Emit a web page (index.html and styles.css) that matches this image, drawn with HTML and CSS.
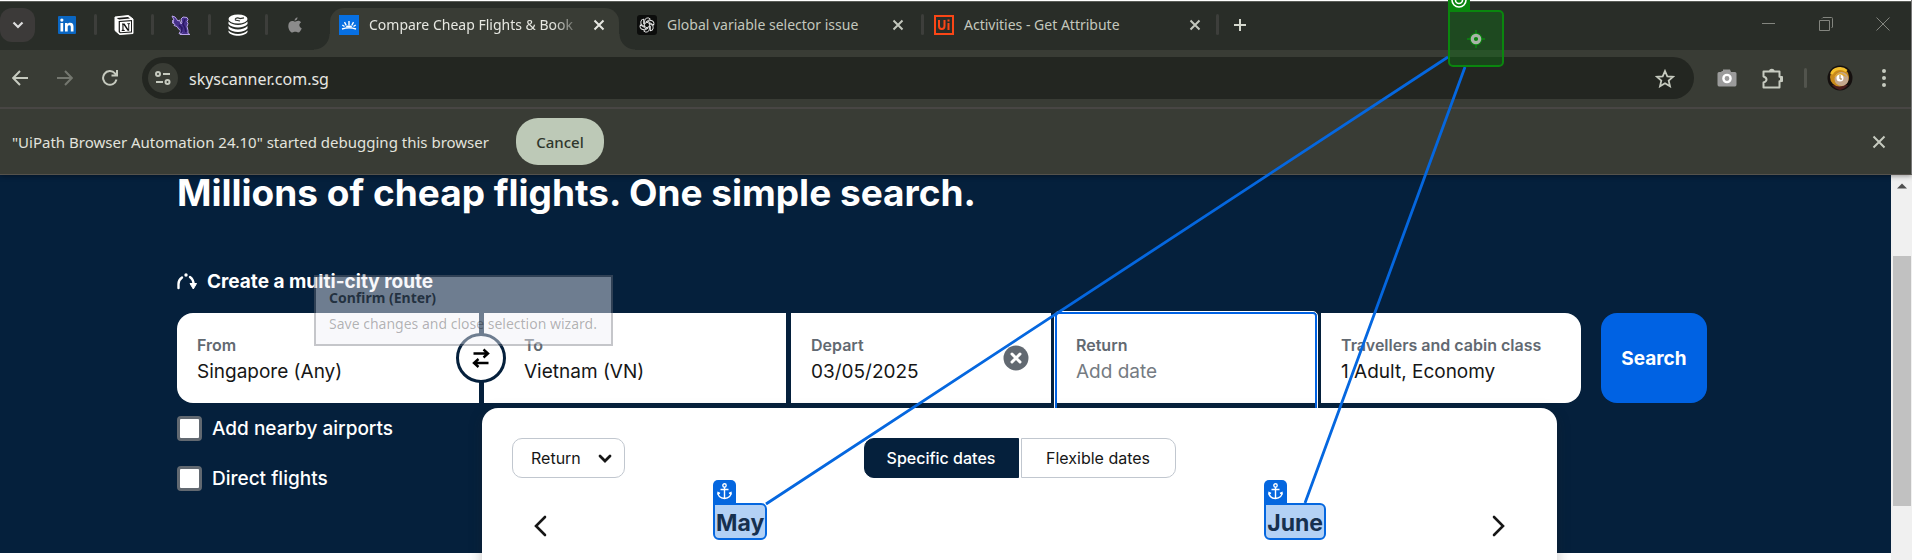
FILE: index.html
```html
<!DOCTYPE html>
<html lang="en">
<head>
<meta charset="utf-8">
<title>Compare Cheap Flights &amp; Book</title>
<link rel="stylesheet" href="styles.css">
</head>
<body>
<header class="browser">
  <nav class="tabs" aria-label="Tabs">
    <button class="tab-search" aria-label="Search tabs"><svg width="12" height="8" viewBox="0 0 12 8"><path d="M1.500 1.500 6 6l4.500-4.500" fill="none" stroke="currentColor" stroke-width="2.200"/></svg></button>
    <div class="pinned">
      <button class="pin" aria-label="LinkedIn"><svg width="18" height="18" viewBox="0 0 18 18"><rect width="18" height="18" rx="1" fill="#0a66c2"/><path d="M2.500 7h2.700v8.500H2.500zM7 7h2.500v1.200C10.100 7.300 11 6.800 12.200 6.800c2.400 0 3.300 1.500 3.300 4v4.700h-2.700v-4.200c0-1.200-.3-2.100-1.500-2.100s-1.600.9-1.600 2.100v4.200H7z" fill="#fff"/><circle cx="3.850" cy="4.100" r="1.600" fill="#fff"/></svg></button>
      <button class="pin" aria-label="Notion"><svg width="20" height="20" viewBox="0 0 20 20"><path d="M1 2 14.500.5 19 4v14.500L5.500 19.500 1 15.500z" fill="#fff" stroke="#fff" stroke-linejoin="round"/><path d="M2.600 2.900 14 2l2 1.600L5 4.500zM4.700 6 18 5v12.400L6 18.200 4.700 17z" fill="#191a19"/><path d="M5.900 7 17 6.200v10.300l-10.400.7-.7-.8z" fill="#fff"/><path d="M8 8.500h2.500l3.800 5.700V9.300l-1-.2v-.9H16V9l-.8.300v6.500h-1.600L9.500 9.800v5l1.200.3v.8H7.700v-.8l.7-.3V9.500L8 9.300z" fill="#111"/></svg></button>
      <button class="pin" aria-label="Gryphon"><svg width="20" height="20" viewBox="0 0 20 20"><path d="M1 1l3 1 3 4 1.500-1L10 9l1-1-1-4 2-2 4 .5 1 2-1 2 1 2-1 3 1 4v3l2 1H9l2-2-3 1 2-3-2-1-2-3-3-1 1-1-3-2 2-.5L1 6l2-1z" fill="#46308a" stroke="#b9a4ea"/><path d="M8 10l3 3-1 5M14 4l-2 5 2 4 1 4" fill="none" stroke="#2a1763" stroke-width="1.500"/></svg></button>
      <button class="pin" aria-label="Database"><svg width="22" height="22" viewBox="0 0 22 22"><g fill="#fff"><ellipse cx="11" cy="5" rx="9.500" ry="4.500"/><path d="M1.500 7.500c4 4.500 15 4.500 19 0v2.500c-3 4.500-16 4.500-19 0zM1.500 12c4 4.500 15 4.500 19 0v2.500c-3 4.500-16 4.500-19 0zM1.500 16.500c4 4.500 15 4.500 19 0V18c-3 5-16 5-19 0z"/></g><path d="M8 5.500c1-2 3-2 5-1l4-.7M8 6l5 1" stroke="#292d28" stroke-width="1.200" fill="none"/></svg></button>
      <button class="pin" aria-label="Apple"><svg width="14" height="16" viewBox="0 0 14 16"><path d="M9.500.3c.1 1.900-1.100 3.300-2.900 3.400C6.500 2 7.900.6 9.500.3zM7 4.700c.7 0 1.700-.9 3.200-.9 1.300 0 2.300.6 2.900 1.500-2.600 1.500-2.200 4.800.6 5.900-.6 1.800-1.900 4.300-3.500 4.300-1.100 0-1.500-.7-2.900-.7s-1.800.7-2.900.7C2.300 15.500.3 12 .3 8.900c0-3.200 2-4.900 3.900-4.900 1.300 0 2.200.7 2.800.7z" fill="#8b8b8b"/></svg></button>
    </div>
    <div class="tab active">
      <svg class="fav" width="20" height="20" viewBox="0 0 20 20"><rect width="20" height="20" fill="#0770e3"/><path d="M3 14c5-1.600 9-1.600 14 0M10 10V6M7.300 10.500 5.500 7.200M12.700 10.500l1.800-3.300M5.500 11.500 3.300 10M14.500 11.500l2.200-1.500" stroke="#fff" stroke-width="1.400" fill="none"/><path d="M6.500 12.600c1-3 6-3 7 0z" fill="#fff"/></svg>
      <span class="title fade">Compare Cheap Flights &amp; Book</span>
      <button class="x" aria-label="Close tab"><svg width="12" height="12" viewBox="0 0 12 12"><path d="m1.500 1.500 9 9m0-9-9 9" stroke="currentColor" stroke-width="2"/></svg></button>
    </div>
    <div class="tab">
      <svg class="fav" width="20" height="20" viewBox="0 0 20 20"><rect width="20" height="20" rx="3" fill="#0c0d0c"/><g fill="none" stroke="#eee" stroke-width=".9"><path id="petal" d="M7.600 11.400V5.900a3.200 3.200 0 0 1 5.800-1.700L8.900 6.800"/><use href="#petal" transform="rotate(60 10 10)"/><use href="#petal" transform="rotate(120 10 10)"/><use href="#petal" transform="rotate(180 10 10)"/><use href="#petal" transform="rotate(240 10 10)"/><use href="#petal" transform="rotate(300 10 10)"/></g></svg>
      <span class="title">Global variable selector issue</span>
      <button class="x" aria-label="Close tab"><svg width="12" height="12" viewBox="0 0 12 12"><path d="m1.500 1.500 9 9m0-9-9 9" stroke="currentColor" stroke-width="2"/></svg></button>
    </div>
    <div class="tab last">
      <svg class="fav" width="20" height="20" viewBox="0 0 20 20"><path d="M1 1h18v18H1z" fill="none" stroke="#fa4616" stroke-width="2"/><path d="M5 5v6c0 4 5.500 4 5.500 0V5M14.500 8v7M14.500 4.500v2" fill="none" stroke="#fa4616" stroke-width="2"/></svg>
      <span class="title">Activities - Get Attribute</span>
      <button class="x" aria-label="Close tab"><svg width="12" height="12" viewBox="0 0 12 12"><path d="m1.500 1.500 9 9m0-9-9 9" stroke="currentColor" stroke-width="2"/></svg></button>
    </div>
    <button class="new-tab" aria-label="New tab"><svg width="14" height="14" viewBox="0 0 14 14"><path d="M7 1v12M1 7h12" stroke="currentColor" stroke-width="2"/></svg></button>
    <div class="window">
      <button aria-label="Minimise"><svg width="14" height="14" viewBox="0 0 14 14"><path d="M0 6.500h13" stroke="currentColor"/></svg></button>
      <button aria-label="Restore"><svg width="14" height="14" viewBox="0 0 14 14"><path d="M.5 3.500h10v10H.5zM3 1.500 4 .5h8.500q1 0 1 1V10l-1 1" fill="none" stroke="currentColor"/></svg></button>
      <button aria-label="Close"><svg width="14" height="14" viewBox="0 0 14 14"><path d="m.5.5 13 13m0-13-13 13" stroke="currentColor"/></svg></button>
    </div>
  </nav>
  <div class="toolbar">
    <button aria-label="Back"><svg width="16" height="16" viewBox="0 0 16 16"><path d="M16 8H1.500M8 1 1.200 8 8 15" fill="none" stroke="currentColor" stroke-width="2"/></svg></button>
    <button class="off" aria-label="Forward"><svg width="16" height="16" viewBox="0 0 16 16"><path d="M0 8h14.500M8 1l6.800 7L8 15" fill="none" stroke="currentColor" stroke-width="2"/></svg></button>
    <button aria-label="Reload"><svg width="16" height="16" viewBox="0 0 16 16"><path d="M14.500 9.500A6.800 6.800 0 1 1 13 3.400L15 5.500M15 0v5.600H9.500" fill="none" stroke="currentColor" stroke-width="2"/></svg></button>
    <div class="address">
      <button class="site" aria-label="Site information"><svg width="16" height="14" viewBox="0 0 16 14"><g fill="none" stroke="currentColor" stroke-width="2"><circle cx="3" cy="3" r="2"/><path d="M8 3h7M1 11h7"/><circle cx="12.500" cy="11" r="2"/></g></svg></button>
      <input type="text" value="skyscanner.com.sg" aria-label="Address">
      <button class="star" aria-label="Bookmark"><svg width="20" height="19" viewBox="0 0 20 19"><path d="m10 2 2.300 5.300 5.700.5-4.300 3.800 1.300 5.700-5-3-5 3 1.300-5.700L2 7.800l5.700-.5z" fill="none" stroke="currentColor" stroke-width="1.800"/></svg></button>
    </div>
    <button aria-label="Camera"><svg width="20" height="18" viewBox="0 0 20 18"><path d="M2 3h2.500V2H6V.500h7L14 3h4q1.500 0 1.500 1.500v11q0 2-1.500 2H2q-1.500 0-1.500-2v-11Q.5 3 2 3z" fill="#9b9b9b"/><circle cx="10" cy="9.500" r="3.600" fill="#9b9b9b" stroke="#fff" stroke-width="2.400"/></svg></button>
    <button class="ext" aria-label="Extensions"><svg width="22" height="21" viewBox="0 0 22 21"><path d="M1.500 3.500h16v5.200l2.500.3v4l-2.500.3v6.200h-16v-5q3-1 3-3t-3-3z" fill="none" stroke="currentColor" stroke-width="2" stroke-linejoin="round"/><path d="M7 3.500a2.800 2.800 0 0 1 5.600 0zM18 8.700a2.700 2.700 0 0 1 0 5.400z" fill="currentColor"/></svg></button>
    <span class="bar"></span>
    <button aria-label="Profile"><svg width="26" height="26" viewBox="0 0 26 26"><circle cx="13" cy="13" r="12.500" fill="#15100f"/><path d="M13 25q-5-1-8-5l16 0q-3 4-8 5z" fill="#4a1d1d"/><circle cx="12.500" cy="12" r="9.500" fill="#c98a1b"/><path d="M4.500 9a9 8 0 0 1 15-3" stroke="#f4c12e" stroke-width="3" fill="none"/><circle cx="14.500" cy="14" r="7" fill="#c4a78d"/><path d="M7 12q6-8 13 0-6-3-13 0z" fill="#e3a92b"/><circle cx="13" cy="13" r="3.500" fill="#fff"/><path d="M13 10v4h2" stroke="#997440" fill="none"/></svg></button>
    <button aria-label="Menu"><svg width="4" height="18" viewBox="0 0 4 18"><g fill="currentColor"><circle cx="2" cy="2" r="2"/><circle cx="2" cy="9" r="2"/><circle cx="2" cy="16" r="2"/></g></svg></button>
  </div>
  <div class="infobar">
    <span>"UiPath Browser Automation 24.10" started debugging this browser</span>
    <button class="cancel">Cancel</button>
    <button class="dismiss" aria-label="Dismiss"><svg width="14" height="14" viewBox="0 0 14 14"><path d="m1.500 1.500 11 11m0-11-11 11" stroke="currentColor" stroke-width="2"/></svg></button>
  </div>
</header>
<div class="viewport">
  <main class="page">
    <section class="hero">
      <h1>Millions of cheap flights. One simple search.</h1>
      <a class="multi" href="#"><svg width="20" height="17" viewBox="0 0 20 17"><g fill="none" stroke="currentColor" stroke-width="2.400" stroke-linecap="round"><path d="M1.500 15v-4q0-4 3.500-6.500M13 4q3.500 2.500 3.500 7"/></g><circle cx="9" cy="2" r="1.700" fill="currentColor"/><path d="M13 10.500h6.500L16.300 16z" fill="currentColor" stroke="currentColor" stroke-linejoin="round"/></svg>Create a multi-city route</a>
      <form class="search">
        <div class="fields">
          <div class="field first"><label for="from">From</label><input id="from" value="Singapore (Any)">
            <button type="button" class="swap" aria-label="Swap"><svg width="18" height="20" viewBox="0 0 18 20"><path d="M1.500 5.500H15M11.500 1.500l4.500 4-4.500 4M16.500 15H3M6.500 11 2 15l4.500 4" fill="none" stroke="currentColor" stroke-width="2.400"/></svg></button></div>
          <div class="field to"><label for="to">To</label><input id="to" value="Vietnam (VN)"></div>
          <div class="field"><label for="depart">Depart</label><input id="depart" value="03/05/2025">
            <button type="button" class="clear" aria-label="Clear date"><svg width="26" height="26" viewBox="0 0 26 26"><circle cx="13" cy="13" r="12.500" fill="#626971"/><path d="m9 9 8 8m0-8-8 8" stroke="#fff" stroke-width="3" stroke-linecap="round"/></svg></button></div>
          <div class="field focused"><label for="return">Return</label><input id="return" placeholder="Add date"></div>
          <div class="field end"><label for="cabin">Travellers and cabin class</label><input id="cabin" value="1 Adult, Economy"></div>
        </div>
        <button class="submit" type="button">Search</button>
      </form>
      <div class="lower">
        <div class="options">
          <label><input type="checkbox">Add nearby airports</label>
          <label><input type="checkbox">Direct flights</label>
        </div>
        <div class="panel">
          <div class="controls">
            <div class="trip"><select aria-label="Trip type"><option>Return</option></select><svg width="14" height="10" viewBox="0 0 14 10"><path d="m2 2 5 5 5-5" fill="none" stroke="#161616" stroke-width="2.800" stroke-linecap="round"/></svg></div>
            <div class="segments"><button class="on">Specific dates</button><button>Flexible dates</button></div>
          </div>
          <div class="months">
            <button aria-label="Previous month"><svg width="14" height="22" viewBox="0 0 14 22"><path d="M12 2 3 11l9 9" fill="none" stroke="currentColor" stroke-width="2.600" stroke-linecap="round"/></svg></button>
            <div class="names">
            <h2><span class="mark"><i><svg width="15" height="17" viewBox="0 0 15 17"><g fill="none" stroke="#fff" stroke-width="1.400"><circle cx="7.500" cy="2.500" r="1.700"/><path d="M7.500 4.200V15M3.500 6.500h8M1 9.500q0 5.500 6.500 6 6.500-.5 6.500-6M.7 11.500 1 9.500l2 1M14.300 11.500l-.3-2-2 1"/></g></svg></i>May</span></h2>
            <h2><span class="mark"><i><svg width="15" height="17" viewBox="0 0 15 17"><g fill="none" stroke="#fff" stroke-width="1.400"><circle cx="7.500" cy="2.500" r="1.700"/><path d="M7.500 4.200V15M3.500 6.500h8M1 9.500q0 5.500 6.500 6 6.500-.5 6.500-6M.7 11.500 1 9.500l2 1M14.300 11.500l-.3-2-2 1"/></g></svg></i>June</span></h2>
            </div>
            <button aria-label="Next month"><svg width="14" height="22" viewBox="0 0 14 22"><path d="m2 2 9 9-9 9" fill="none" stroke="currentColor" stroke-width="2.600" stroke-linecap="round"/></svg></button>
          </div>
        </div>
      </div>
    </section>
  </main>
  <div class="scrollbar"><svg width="10" height="6" viewBox="0 0 10 6"><path d="M0 5.500 5 .500l5 5z" fill="#505050"/></svg><span class="thumb"></span></div>
</div>
<svg class="links" width="1912" height="560" viewBox="0 0 1912 560"><path d="M1448 57 766 504M1465 67 1305 503" fill="none" stroke="#0567df" stroke-width="2.800"/></svg>
<div class="target"><i><svg width="16" height="16" viewBox="0 0 16 16"><g fill="none" stroke="#fff" stroke-width="1.600"><circle cx="8" cy="8" r="7"/><circle cx="8" cy="8" r="3.500"/></g></svg></i>
<svg width="18" height="18" viewBox="0 0 18 18"><path d="M9 0v18M0 9h18" stroke="#0a860e" stroke-width="1.500"/><circle cx="9" cy="9" r="6.300" fill="#0a860e"/><circle cx="9" cy="9" r="3.700" fill="#0a860e" stroke="#a9b3a8" stroke-width="3.200"/></svg></div>
<div class="tip"><strong>Confirm (Enter)</strong><span>Save changes and close selection wizard.</span></div>
</body>
</html>
```
FILE: styles.css
```css
* { box-sizing: border-box; }
body {
  margin: 0;
  height: 100vh;
  display: flex;
  flex-direction: column;
  position: relative;
  overflow: hidden;
  background: #fff;
  font-family: "Noto Sans", "Open Sans", sans-serif;
  font-size: 15px;
}
button, input, select { font: inherit; color: inherit; margin: 0; }
button { border: 0; padding: 0; background: none; display: flex; align-items: center; justify-content: center; flex: none; }
svg { display: block; flex: none; }
.browser { background: #393c35; color: #e2e3dd; border-right: 1px solid #777; border-bottom: 1px solid #55524c; position: relative; z-index: 1; box-shadow: 0 1px 5px rgba(0,0,0,.4); }

.tabs { display: flex; height: 50px; background: #292d28; border-top: 1px solid #fff; box-shadow: inset 0 1px #5a5d58; color: #c3c7bd; font-size: 14px; }
.tab-search { width: 35px; height: 34px; margin-top: 7px; border-radius: 12px; background: #3c3a39; color: #ddd; }
.pinned { display: flex; padding-left: 3px; }
.pin { width: 57px; height: 48px; position: relative; }
.pin + .pin::before, .tab.last::before, .tab.last::after {
  content: ""; position: absolute; left: -1px; top: 13px; width: 3px; height: 21px; border-radius: 2px; background: #3d3e3b;
}
.tab { position: relative; display: flex; align-items: center; width: 297px; padding: 0 18px 2px 12px; gap: 10px; }
.tab.active { width: 289px; margin: 7px 6px 0 7px; padding: 0 14px 9px 9px; border-radius: 14px 14px 0 0; background: #393c35; color: #e6e7e1; }
.tab.active::before, .tab.active::after { content: ""; position: absolute; bottom: 0; width: 16px; height: 16px; }
.tab.active::before { left: -16px; background: radial-gradient(circle at 0 0, transparent 15px, #393c35 16px); }
.tab.active::after { right: -16px; background: radial-gradient(circle at 100% 0, transparent 15px, #393c35 16px); }
.tab.last::after { left: auto; right: 0; }
.title { flex: 1; white-space: nowrap; }
.fade { -webkit-mask-image: linear-gradient(90deg, #000 86%, transparent); mask-image: linear-gradient(90deg, #000 86%, transparent); }
.new-tab { width: 42px; height: 48px; color: #d5d8ce; }
.window { display: flex; gap: 43px; margin-left: auto; padding: 0 21px 4px 0; color: #83857f; }

.toolbar { display: flex; align-items: center; height: 59px; padding: 0 25px 1px 12px; border-bottom: 2px solid #484644; color: #c6cabf; }
.toolbar > button + button { margin-left: 29px; }
.toolbar .off { color: #74776f; }
.address { flex: 1; display: flex; align-items: center; height: 42px; margin: 0 23px 0 24px; padding: 0 19px 0 6px; border-radius: 21px; background: #232621; }
.site { width: 30px; height: 30px; border-radius: 50%; background: #393c35; }
.address input { flex: 1; min-width: 0; margin-left: 11px; padding: 2px 0 0; border: 0; background: none; color: #e6e7e1; font-size: 16px; outline: 0; }
.toolbar > .ext { margin-left: 25px; }
.bar { width: 3px; height: 20px; margin: 0 20px 0 20px; border-radius: 2px; background: #52544d; }

.infobar { display: flex; align-items: center; gap: 27px; height: 65px; padding: 0 25px 0 12px; }
.cancel { width: 88px; height: 47px; border-radius: 22px; background: #bdc9b7; color: #2f362c; font-weight: 500; }
.dismiss { margin-left: auto; color: #c6cabf; }

.viewport { flex: 1; min-height: 0; display: flex; }
.page { flex: 1; min-width: 0; overflow: hidden; font-family: Inter, "Liberation Sans", sans-serif; color: #161616; }
.hero { height: 378px; padding: 0 184px 0 177px; background: #05203c; }
h1 { margin: 0; height: 96px; line-height: 36px; font-size: 37px; font-weight: 700; color: #fff; white-space: nowrap; }
.multi { display: flex; align-items: center; gap: 10px; width: max-content; height: 20px; color: #fff; font-size: 19px; font-weight: 700; text-decoration: none; }
.search { display: flex; gap: 20px; margin-top: 22px; height: 90px; }
.fields { flex: 1; display: grid; grid-template-columns: 302fr 302fr 260fr 260fr 260fr; gap: 5px; }
.field { position: relative; min-width: 0; padding: 21px 20px 0; background: #fff; display: flex; flex-direction: column; }
.field label { height: 22px; line-height: 22px; font-size: 16px; font-weight: 600; color: #626971; white-space: nowrap; }
.field input { width: 100%; height: 30px; padding: 0; border: 0; background: none; font-size: 19px; color: #161616; outline: 0; }
.field input::placeholder { color: #757b82; opacity: 1; }
.first { border-radius: 16px 0 0 16px; z-index: 1; }
.field.to { padding-left: 40px; }
.end { border-radius: 0 16px 16px 0; }
.focused::after { content: ""; position: absolute; inset: -1px -1px -16px; border: 2px solid #0062e3; border-radius: 4px; outline: 1px solid #fff; }
.swap { position: absolute; right: -27px; top: 20px; width: 50px; height: 50px; border: 3px solid #05203c; border-radius: 50%; background: #fff; color: #000; }
.clear { position: absolute; right: 22px; top: 32px; }
.submit { width: 106px; border-radius: 16px; background: #0062e3; color: #fff; font-size: 19px; font-weight: 700; }
.lower { display: grid; grid-template-columns: 305fr 1075fr; margin-top: 5px; padding-right: 150px; }
.options { padding-top: 8px; display: flex; flex-direction: column; gap: 25px; color: #fff; font-size: 19px; font-weight: 500; }
.options label { display: flex; align-items: center; gap: 10px; height: 25px; white-space: nowrap; }
.options input { appearance: none; width: 25px; height: 25px; margin: 0; border: 3px solid #626971; border-radius: 4px; background: #fff; }
.panel { position: relative; min-width: 0; height: 400px; padding: 30px; border-radius: 16px 16px 0 0; background: #fff; box-shadow: 0 4px 14px rgba(37,32,31,.25); }
.controls { display: grid; grid-template-columns: 1fr auto 1fr; }
.trip { position: relative; width: 113px; height: 40px; }
.trip select { appearance: none; width: 100%; height: 100%; padding: 0 18px; border: 1px solid #c1c7cf; border-radius: 10px; background: #fff; font-size: 16px; }
.trip svg { position: absolute; right: 13px; top: 16px; pointer-events: none; }
.segments { display: flex; gap: 2px; }
.segments button { width: 155px; height: 40px; border: 1px solid #c1c7cf; border-radius: 0 10px 10px 0; font-size: 16px; }
.segments .on { border-color: #05203c; border-radius: 10px 0 0 10px; background: #05203c; color: #fff; font-weight: 500; }
.months { display: flex; justify-content: space-between; align-items: center; margin-top: 25px; padding: 0 21px; height: 37px; color: #161616; }
.months > button { padding-top: 8px; }
.names { display: flex; justify-content: space-between; width: 63%; }
.months h2 { margin: 0; font-size: 23px; line-height: 33px; font-weight: 700; display: flex; justify-content: center; }
.mark { position: relative; height: 37px; padding: 2px 1px 0; border: 2px solid #0567df; border-radius: 0 6px 6px 6px; background: #b3d1f5; color: #16304f; }
.mark i { position: absolute; left: -2px; top: -25px; width: 23px; height: 23px; border-radius: 5px 5px 0 0; background: #0567df; display: grid; place-items: center; }
.scrollbar { width: 21px; padding: 8px 1px 0 2px; background: #f0f0f0; display: flex; flex-direction: column; }
.scrollbar svg { margin-left: 4px; }
.thumb { height: 250px; margin-top: 67px; background: #c1c1c1; }

.links { position: absolute; left: 0; top: 0; z-index: 2; pointer-events: none; }
.target { position: absolute; left: 1448px; top: 10px; z-index: 3; width: 56px; height: 57px; border: 2px solid #0a860e; border-radius: 0 5px 5px 5px; background: rgba(10,134,14,.32); display: grid; place-items: center; }
.target i { position: absolute; left: -2px; top: -15px; width: 22px; height: 14px; background: #0a860e; display: flex; align-items: flex-end; justify-content: center; padding-bottom: 3px; }
.tip { position: absolute; left: 314px; top: 275px; z-index: 3; width: 299px; height: 71px; padding: 10px 13px; border: 2px solid rgba(110,112,122,.4); background: rgba(240,240,246,.45); background-clip: padding-box; font-size: 14px; line-height: 22px; white-space: nowrap; color: rgba(0,0,0,.3); }
.tip strong { display: block; color: rgba(15,28,43,.8); }
.tip span { display: block; margin-top: 4px; }
```
